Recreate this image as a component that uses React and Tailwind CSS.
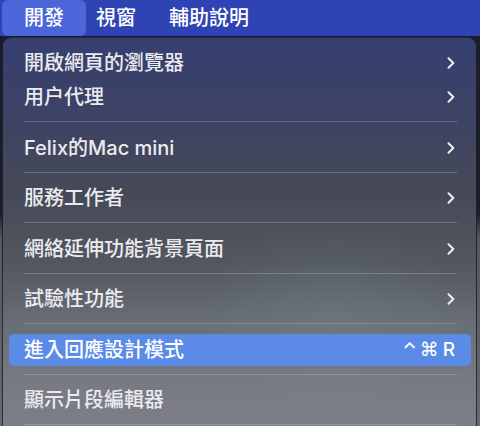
import React from "react";

const FONT = { fontFamily: 'Inter, "Noto Sans CJK TC", "Noto Sans", sans-serif' };

function Chevron() {
  return (
    <svg width="8" height="12" viewBox="0 0 8 12" className="shrink-0">
      <path d="M1.5 1.2 L6.3 6 L1.5 10.8" fill="none" stroke="#ececf0" strokeWidth="2" strokeLinecap="round" strokeLinejoin="round" />
    </svg>
  );
}

function Item({ label, chevron, shortcut, active }) {
  return (
    <div className="h-[34px] py-px">
      <div
        className={
          "h-full rounded-[5px] pl-[15px] pr-[16px] flex items-center justify-between " +
          (active ? "bg-[#5b8be6] text-white" : "text-[#ebebef]")
        }
      >
        <span className="text-[20px] leading-none font-medium whitespace-nowrap">{label}</span>
        {chevron && <Chevron />}
        {shortcut && (
          <span className="flex items-center text-[19px] leading-none font-medium">
            <span className="mr-[3px] text-[18px]">⌃</span>
            <span className="mr-[4px] text-[19px]" style={{ fontFamily: '"DejaVu Sans", sans-serif' }}>⌘</span>
            <span>R</span>
          </span>
        )}
      </div>
    </div>
  );
}

function Sep() {
  return (
    <div className="pt-[7px] pb-[8.5px] pl-[15px] pr-[14px]">
      <div className="h-px bg-white/20" />
    </div>
  );
}

export default function App() {
  return (
    <div
      className="w-[480px] h-[426px] overflow-hidden bg-[linear-gradient(to_bottom,#1a1c2a_0%,#1c1d24_50%,#55585e_56%,#666a70_100%)]"
      style={FONT}
    >
      <div className="h-[36px] bg-[#2e44b4] flex items-center text-white text-[20px] font-medium leading-none">
        <div className="ml-[2px] h-[36px] px-[22px] rounded-[6px] bg-[#4b66d9] flex items-center">開發</div>
        <div className="ml-[10px]">視窗</div>
        <div className="ml-[33px]">輔助說明</div>
      </div>
      <div className="ml-[2px] mt-px w-[475px] h-[400px] rounded-t-[9px] border border-[#15172a]/80 overflow-hidden relative bg-[linear-gradient(to_bottom,#363f70_0%,#3b4266_16%,#454957_38%,#52565e_56%,#696f76_72%,#787b83_88%,#7d8088_100%)] pt-[8px] px-[5px]">
        <div className="pointer-events-none absolute left-[200px] top-[180px] w-[260px] h-[200px] rounded-full bg-[radial-gradient(closest-side,rgba(120,140,145,0.25),rgba(120,140,145,0))]" />
        <div className="relative pl-[1px]">
          <Item label="開啟網頁的瀏覽器" chevron />
          <Item label="用户代理" chevron />
          <Sep />
          <Item label="Felix的Mac mini" chevron />
          <Sep />
          <Item label="服務工作者" chevron />
          <Sep />
          <Item label="網絡延伸功能背景頁面" chevron />
          <Sep />
          <Item label="試驗性功能" chevron />
          <Sep />
          <Item label="進入回應設計模式" shortcut active />
          <Sep />
          <Item label="顯示片段編輯器" />
          <Sep />
        </div>
      </div>
    </div>
  );
}
